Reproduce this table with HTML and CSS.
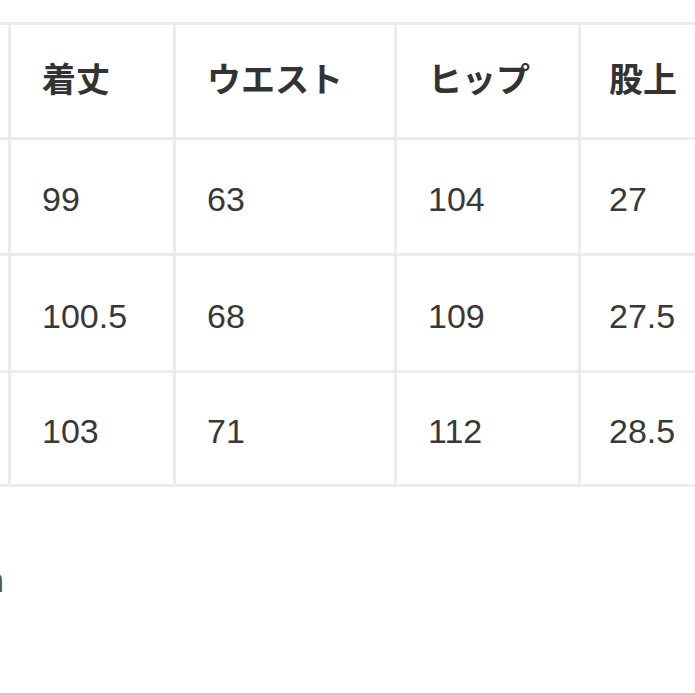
FILE: index.html
```html
<!DOCTYPE html>
<html lang="ja">
<head>
<meta charset="utf-8">
<link rel="stylesheet" href="styles.css">
</head>
<body>
<div class="page">
  <div class="table">
    <div class="cell"></div>
    <div class="cell head">着丈</div>
    <div class="cell head">ウエスト</div>
    <div class="cell head">ヒップ</div>
    <div class="cell head">股上</div>

    <div class="cell"></div>
    <div class="cell num">99</div>
    <div class="cell num">63</div>
    <div class="cell num">104</div>
    <div class="cell num">27</div>

    <div class="cell"></div>
    <div class="cell num">100.5</div>
    <div class="cell num">68</div>
    <div class="cell num">109</div>
    <div class="cell num">27.5</div>

    <div class="cell"></div>
    <div class="cell num">103</div>
    <div class="cell num">71</div>
    <div class="cell num">112</div>
    <div class="cell num">28.5</div>
  </div>
  <div class="note"><span>単位：cm</span></div>
</div>
</body>
</html>
```

FILE: styles.css
```css
html, body {
  margin: 0;
  padding: 0;
  background: #ffffff;
  overflow: hidden;
}

.page {
  box-sizing: border-box;
  height: 695px;
  padding-top: 22px;
  border-bottom: 2px solid #c9c9c9;
  font-family: "Liberation Sans", Arial, "Noto Sans CJK JP", sans-serif;
  color: #333333;
}

.table {
  display: grid;
  grid-template-columns: 8px 162px 218px 181px 1fr;
  grid-template-rows: 112px 113px 114px 111px;
  gap: 3px;
  background: #ececec;
  border-top: 3px solid #ececec;
  border-bottom: 3px solid #ececec;
}

.cell {
  background: #ffffff;
  display: flex;
  align-items: center;
  padding-left: 31px;
  font-size: 34px;
  white-space: nowrap;
  overflow: hidden;
}

.cell:nth-child(5n+1) {
  padding-left: 0;
}

.cell:nth-child(5n) {
  padding-left: 28px;
}

.num {
  padding-top: 6px;
  color: #383838;
}

.head {
  font-family: "Noto Sans CJK JP", sans-serif;
  font-weight: 700;
  padding-bottom: 8px;
}

.note {
  display: flex;
  justify-content: flex-end;
  width: 4px;
  margin-top: 73px;
  font-size: 34px;
  line-height: 40px;
  color: #555555;
  white-space: nowrap;
}
```
